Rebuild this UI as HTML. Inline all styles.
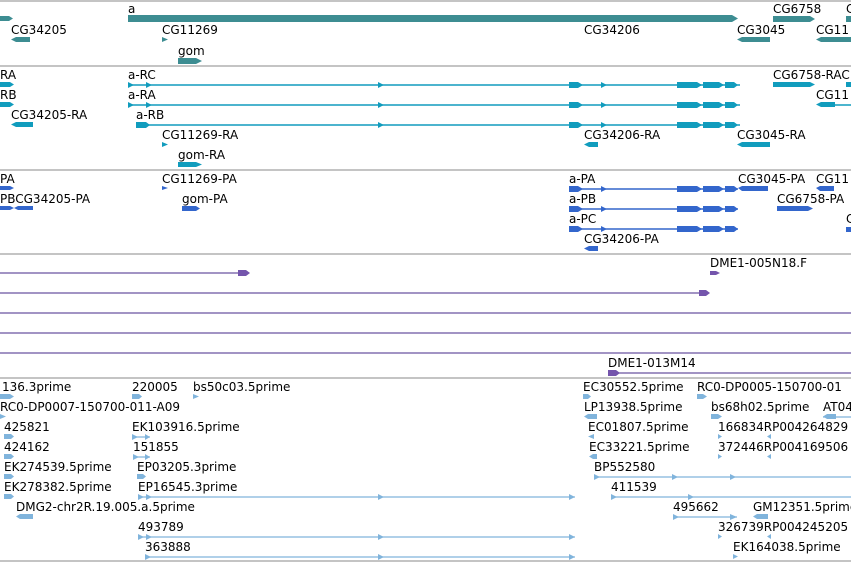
<!DOCTYPE html>
<html><head><meta charset="utf-8"><style>
html,body{margin:0;padding:0;background:#fff;width:851px;height:562px;overflow:hidden}
svg{display:block}
text{font-family:"DejaVu Sans","Liberation Sans",sans-serif;font-size:12px;fill:#000}
</style></head><body>
<svg width="851" height="562" viewBox="0 0 851 562" xmlns="http://www.w3.org/2000/svg">
<g stroke="#c4c4c4" stroke-width="2">
<line x1="0" y1="1" x2="851" y2="1"/><line x1="0" y1="66" x2="851" y2="66"/><line x1="0" y1="170" x2="851" y2="170"/><line x1="0" y1="254" x2="851" y2="254"/><line x1="0" y1="378" x2="851" y2="378"/><line x1="0" y1="561" x2="851" y2="561"/>
</g>

<!-- Gene track -->
<g fill="#3d8d92">
<polygon points="0,16 9,16 13,18.5 9,21 0,21"/>
<polygon points="128,15 732,15 738,18.5 732,22 128,22"/>
<polygon points="11,39.5 16,37 30,37 30,42 16,42"/>
<polygon points="162,37 168,39.5 162,42"/>
<polygon points="178,58 196,58 202,61 196,64 178,64"/>
<polygon points="773,16 810,16 815,19 810,22 773,22"/>
<polygon points="846,16 851,16 851,22 846,22"/>
<polygon points="737,39.5 742,37 770,37 770,42 742,42"/>
<polygon points="816,39.5 821,37 851,37 851,42 821,42"/>
</g>
<text x="128" y="13">a</text><text x="11" y="34">CG34205</text><text x="162" y="34">CG11269</text><text x="178" y="55">gom</text>
<text x="584" y="34">CG34206</text><text x="773" y="13">CG6758</text><text x="846" y="13">C</text><text x="737" y="34">CG3045</text><text x="816" y="34">CG11</text>

<!-- Transcript track -->
<g fill="#119cbd" stroke="none">
<polygon points="0,82 10,82 14,84.5 10,87 0,87"/>
<polygon points="0,102 10,102 14,104.5 10,107 0,107"/>
<polygon points="11,124.5 16,122 33,122 33,127 16,127"/>
<rect x="128" y="84" width="723" height="2" transform="scale(1)" style="display:none"/>
</g>
<g stroke="#119cbd" stroke-width="1.5"><line x1="128" y1="85" x2="740" y2="85"/><line x1="128" y1="105" x2="740" y2="105"/><line x1="136" y1="125" x2="740" y2="125"/><line x1="835" y1="105" x2="851" y2="105"/></g>
<g fill="#119cbd">
<polygon points="128,82 134,85 128,88"/><polygon points="146,82 152,85 146,88"/>
<polygon points="128,102 134,105 128,108"/><polygon points="146,102 152,105 146,108"/>
<polygon points="136,122 146,122 150,125 146,128 136,128"/>
<g id="ex">
<polygon points="378,82 384,85 378,88"/>
<polygon points="569,82 578,82 583,85 578,88 569,88"/>
<polygon points="601,82 607,85 601,88"/>
<polygon points="677,82 697,82 702,85 697,88 677,88"/>
<polygon points="703,82 719,82 724,85 719,88 703,88"/>
<polygon points="725,82 734,82 738,85 734,88 725,88"/>
</g>
<use href="#ex" y="20"/><use href="#ex" y="40"/>
<polygon points="162,142 168,144.5 162,147"/>
<polygon points="178,162 196,162 202,164.5 196,167 178,167"/>
<polygon points="584,144.5 589,142 598,142 598,147 589,147"/>
<polygon points="737,144.5 742,142 770,142 770,147 742,147"/>
<polygon points="773,82 810,82 815,84.5 810,87 773,87"/>
<polygon points="846,82 851,82 851,87 846,87"/>
<polygon points="816,104.5 821,102 835,102 835,107 821,107"/>
</g>
<text x="0" y="79">RA</text><text x="0" y="99">RB</text><text x="11" y="119">CG34205-RA</text>
<text x="128" y="79">a-RC</text><text x="128" y="99">a-RA</text><text x="136" y="119">a-RB</text>
<text x="162" y="139">CG11269-RA</text><text x="178" y="159">gom-RA</text>
<text x="584" y="139">CG34206-RA</text><text x="737" y="139">CG3045-RA</text>
<text x="773" y="79">CG6758-RAC</text><text x="816" y="99">CG11</text>

<!-- Protein track -->
<g stroke="#3366cc" stroke-width="1.5"><line x1="569" y1="189" x2="738" y2="189"/><line x1="569" y1="209" x2="738" y2="209"/><line x1="569" y1="229" x2="738" y2="229"/></g>
<g fill="#3366cc">
<polygon points="0,186 10,186 14,188 10,190 0,190"/>
<polygon points="0,206 10,206 14,208 10,210 0,210"/>
<polygon points="14,208 18,206 33,206 33,210 18,210"/>
<polygon points="162,186 168,188 162,190"/>
<polygon points="182,206 196,206 200,208.5 196,211 182,211"/>
<g id="px">
<polygon points="569,186 578,186 583,189 578,192 569,192"/>
<polygon points="601,186 607,189 601,192"/>
<polygon points="677,186 697,186 702,189 697,192 677,192"/>
<polygon points="703,186 719,186 724,189 719,192 703,192"/>
<polygon points="725,186 734,186 738,189 734,192 725,192"/>
</g>
<use href="#px" y="20"/><use href="#px" y="40"/>
<polygon points="584,248.5 589,246 598,246 598,251 589,251"/>
<polygon points="738,188 742,186 768,186 768,191 742,191"/>
<polygon points="816,188 820,186 834,186 834,191 820,191"/>
<polygon points="777,206 808,206 813,208.5 808,211 777,211"/>
<polygon points="846,227 851,227 851,232 846,232"/>
</g>
<text x="0" y="183">PA</text><text x="0" y="203">PBCG34205-PA</text><text x="162" y="183">CG11269-PA</text><text x="182" y="203">gom-PA</text>
<text x="569" y="183">a-PA</text><text x="569" y="203">a-PB</text><text x="569" y="223">a-PC</text><text x="584" y="243">CG34206-PA</text>
<text x="738" y="183">CG3045-PA</text><text x="816" y="183">CG11</text><text x="777" y="203">CG6758-PA</text><text x="846" y="223">C</text>

<!-- Purple track -->
<g stroke="#6a55a0" stroke-width="1.2"><line x1="0" y1="273" x2="242" y2="273"/><line x1="0" y1="293" x2="702" y2="293"/><line x1="0" y1="313" x2="851" y2="313"/><line x1="0" y1="333" x2="851" y2="333"/><line x1="0" y1="353" x2="851" y2="353"/><line x1="612" y1="373" x2="851" y2="373"/></g>
<g fill="#7455ac">
<polygon points="238,270 246,270 250,273 246,276 238,276"/>
<polygon points="699,290 706,290 710,293 706,296 699,296"/>
<polygon points="710,271 716,271 720,273 716,275 710,275"/>
<polygon points="608,370 616,370 620,373 616,376 608,376"/>
</g>
<text x="710" y="267">DME1-005N18.F</text><text x="608" y="367">DME1-013M14</text>

<!-- EST track -->
<g stroke="#80b4dc" stroke-width="1.3">
<line x1="132" y1="437" x2="150" y2="437"/><line x1="133" y1="457" x2="150" y2="457"/>
<line x1="594" y1="477" x2="851" y2="477"/>
<line x1="138" y1="497" x2="575" y2="497"/><line x1="611" y1="497" x2="851" y2="497"/>
<line x1="673" y1="517" x2="737" y2="517"/>
<line x1="138" y1="537" x2="575" y2="537"/><line x1="145" y1="557" x2="575" y2="557"/>
<line x1="823" y1="417" x2="851" y2="417"/>
</g>
<g fill="#80b4dc">
<polygon points="0,394 10,394 14,396.5 10,399 0,399"/>
<polygon points="132,394 139,394 142,396.5 139,399 132,399"/>
<polygon points="193,394 199,396.5 193,399"/>
<polygon points="583,394 588,394 591,396.5 588,399 583,399"/>
<polygon points="697,394 703,394 707,396.5 703,399 697,399"/>
<polygon points="0,414 6,416.5 0,419"/>
<polygon points="584,416.5 588,414 597,414 597,419 588,419"/>
<polygon points="711,414 718,414 722,416.5 718,419 711,419"/>
<polygon points="823,416.5 827,414 836,414 836,419 827,419"/>
<polygon points="4,434 11,434 14,436.5 11,439 4,439"/>
<polygon points="132,434 138,437 132,440"/><polygon points="145,434 150,437 145,440"/>
<polygon points="588,436.5 594,434 594,439"/>
<polygon points="718,434 722,436.5 718,439"/><polygon points="767,436.5 771,434 771,439"/>
<polygon points="4,454 11,454 14,456.5 11,459 4,459"/>
<polygon points="133,454 139,457 133,460"/><polygon points="145,454 150,457 145,460"/>
<polygon points="589,456.5 593,454 597,454 597,459 593,459"/>
<polygon points="718,454 722,456.5 718,459"/><polygon points="767,456.5 771,454 771,459"/>
<polygon points="4,474 11,474 14,476.5 11,479 4,479"/>
<polygon points="137,474 143,474 146,476.5 143,479 137,479"/>
<polygon points="594,474 600,477 594,480"/><polygon points="672,474 678,477 672,480"/><polygon points="730,474 736,477 730,480"/>
<polygon points="4,494 11,494 14,496.5 11,499 4,499"/>
<polygon points="138,494 144,497 138,500"/><polygon points="146,494 152,497 146,500"/><polygon points="378,494 384,497 378,500"/><polygon points="569,494 575,497 569,500"/>
<polygon points="611,494 617,497 611,500"/><polygon points="688,494 694,497 688,500"/>
<polygon points="16,516.5 20,514 33,514 33,519 20,519"/>
<polygon points="673,514 679,517 673,520"/><polygon points="730,514 737,517 730,520"/>
<polygon points="753,516.5 757,514 768,514 768,519 757,519"/>
<polygon points="138,534 144,537 138,540"/><polygon points="146,534 152,537 146,540"/><polygon points="378,534 384,537 378,540"/><polygon points="569,534 575,537 569,540"/>
<polygon points="718,534 722,536.5 718,539"/><polygon points="767,536.5 771,534 771,539"/>
<polygon points="145,554 151,557 145,560"/><polygon points="378,554 384,557 378,560"/><polygon points="569,554 575,557 569,560"/>
<polygon points="733,554 738,556.5 733,559"/>
</g>
<text x="2" y="391">136.3prime</text><text x="132" y="391">220005</text><text x="193" y="391">bs50c03.5prime</text><text x="583" y="391">EC30552.5prime</text><text x="697" y="391">RC0-DP0005-150700-01</text>
<text x="0" y="411">RC0-DP0007-150700-011-A09</text><text x="584" y="411">LP13938.5prime</text><text x="711" y="411">bs68h02.5prime</text><text x="823" y="411">AT04</text>
<text x="4" y="431">425821</text><text x="132" y="431">EK103916.5prime</text><text x="588" y="431">EC01807.5prime</text><text x="718" y="431">166834RP004264829</text>
<text x="4" y="451">424162</text><text x="133" y="451">151855</text><text x="589" y="451">EC33221.5prime</text><text x="718" y="451">372446RP004169506</text>
<text x="4" y="471">EK274539.5prime</text><text x="137" y="471">EP03205.3prime</text><text x="594" y="471">BP552580</text>
<text x="4" y="491">EK278382.5prime</text><text x="138" y="491">EP16545.3prime</text><text x="611" y="491">411539</text>
<text x="16" y="511">DMG2-chr2R.19.005.a.5prime</text><text x="673" y="511">495662</text><text x="753" y="511">GM12351.5prime</text>
<text x="138" y="531">493789</text><text x="718" y="531">326739RP004245205</text>
<text x="145" y="551">363888</text><text x="733" y="551">EK164038.5prime</text>
</svg>
</body></html>
